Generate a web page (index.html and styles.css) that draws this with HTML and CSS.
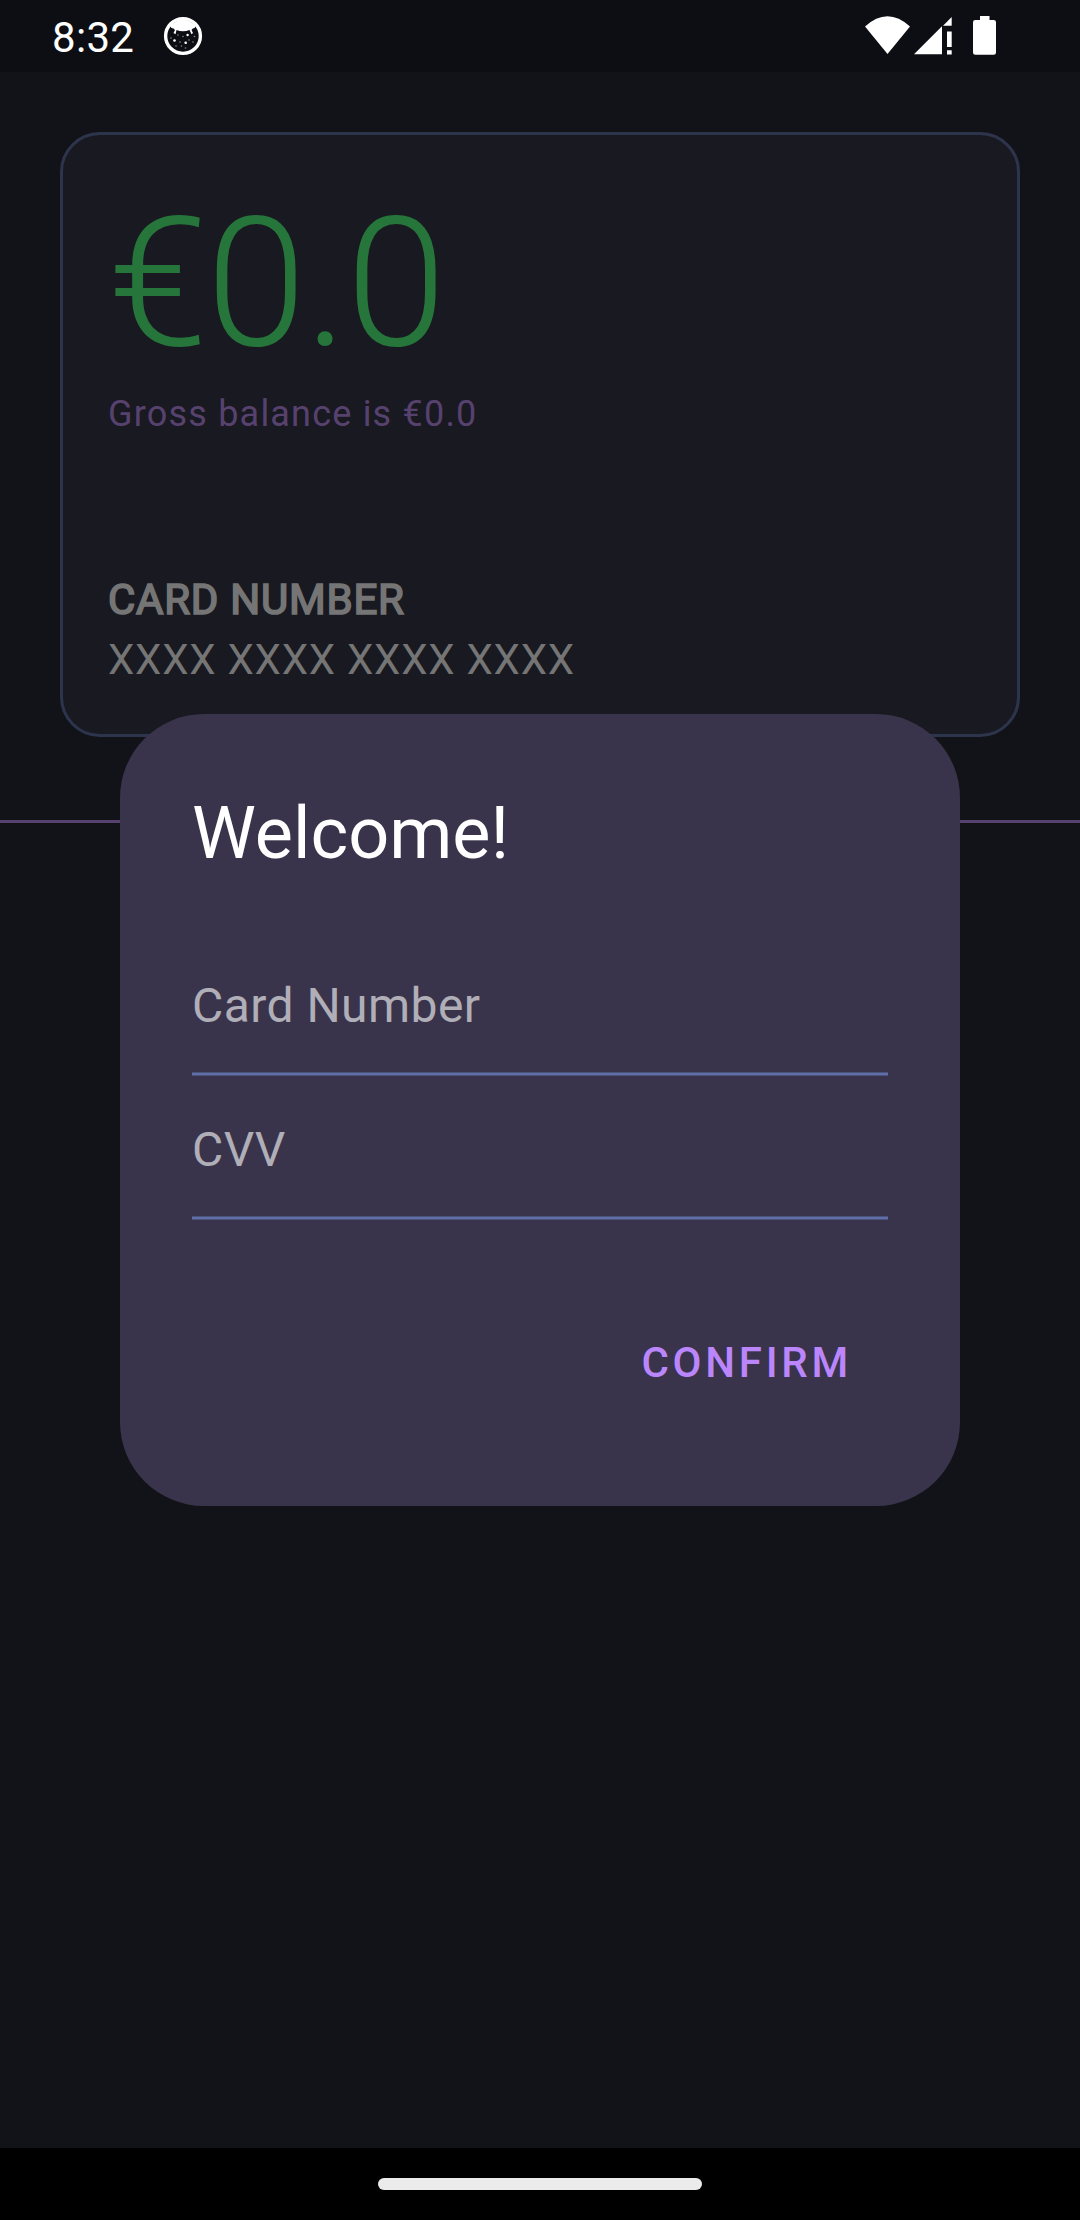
FILE: index.html
```html
<!DOCTYPE html>
<html lang="en">
<head>
<meta charset="utf-8">
<title>Balance</title>
<link rel="stylesheet" href="styles.css">
</head>
<body>
<div class="screen">
  <header class="status">
    <span class="time">8:32</span>
    <svg class="bear" width="40" height="40" viewBox="0 0 40 40">
      <circle cx="20" cy="20" r="17.400" fill="none" stroke="#fff" stroke-width="3.400"/>
      <path d="M7 10Q20-3 33 10L31.500 12L29.800 12.500L28.500 14L30 17L28.500 18.200L26.500 14Q20 16.500 13.500 14L12.500 18.200L10.500 17L12 14L10.500 12.500L8.500 12Z" fill="#fff"/>
      <g fill="#fff"><circle cx="11.500" cy="24.500" r="1.300"/><circle cx="22.700" cy="26.700" r="1.300"/><circle cx="24.600" cy="19" r="1.200"/></g>
      <g fill="#888"><circle cx="15" cy="19" r=".8"/><circle cx="20" cy="20.500" r=".8"/><circle cx="31.500" cy="20.500" r=".8"/><circle cx="17" cy="26" r=".8"/><circle cx="26" cy="24" r=".8"/><circle cx="30" cy="26" r=".8"/><circle cx="13" cy="30" r=".8"/><circle cx="18.500" cy="30" r=".8"/><circle cx="22.500" cy="32" r=".8"/><circle cx="8" cy="22" r=".8"/></g>
    </svg>
    <svg class="signals" width="140" height="40" viewBox="0 0 140 40" fill="#fff">
      <path d="M0 10.500Q22.500-10 45 10.500L22.500 38Z"/>
      <path d="M49 38.300L77 10.300V38.300Z"/>
      <path d="M78 9.700L86.700 1V9.700Z"/>
      <path d="M82 15.500h4.700v15.500H82ZM82 34.300h4.700v4.200H82Z"/>
      <path d="M115 0h9.500v4h4.200q2.300 0 2.300 2.300v30.200q0 2.300-2.300 2.300h-18.400q-2.300 0-2.300-2.300V6.300q0-2.300 2.300-2.300h4.700Z"/>
    </svg>
  </header>
  <main class="content">
    <section class="card">
      <div class="balance">€0.0</div>
      <div class="gross">Gross balance is €0.0</div>
      <div class="label">CARD NUMBER</div>
      <div class="number">XXXX XXXX XXXX XXXX</div>
    </section>
    <div class="divider"></div>
  </main>
  <footer class="nav"><div class="handle"></div></footer>
  <div class="dialog">
    <h1 class="title">Welcome!</h1>
    <div class="field first">Card Number</div>
    <div class="field">CVV</div>
    <div class="actions"><span class="confirm">CONFIRM</span></div>
  </div>
</div>
</body>
</html>
```
FILE: styles.css
```css
* { box-sizing: border-box; }
body { margin: 0; background: #121318; font-family: Roboto, sans-serif; }
.screen { position: relative; width: 1080px; height: 2220px; display: flex; flex-direction: column; overflow: hidden; }
.status { height: 72px; flex: none; display: flex; background: #0d0e13; padding: 16px 75px 0 52px; }
.time { width: 111px; padding-top: 1px; font-size: 42px; line-height: 42px; letter-spacing: 0.3px; color: #fff; }
.signals { margin-left: auto; }
.content { flex: 1; padding-top: 60px; background: #121318; }
.card { margin: 0 60px; height: 605px; padding: 59px 45px 0; border: 3px solid #2d354d; border-radius: 40px; background: #191921; }
.balance { height: 180px; font-size: 180px; line-height: 180px; font-weight: 300; letter-spacing: -1.5px; color: #26753a; }
.gross { margin-top: 19px; font-size: 36px; line-height: 42px; letter-spacing: 1.2px; color: #57426f; }
.label { margin-top: 135px; font-size: 42px; line-height: 60px; letter-spacing: 0.75px; color: #757575; -webkit-text-stroke: 1.7px #757575; }
.number { font-size: 42px; line-height: 60px; letter-spacing: 0.75px; color: #757575; }
.divider { height: 3px; margin-top: 83px; background: #57426f; }
.nav { height: 72px; flex: none; background: #000; padding-top: 30px; }
.handle { width: 324px; height: 12px; margin: 0 auto; border-radius: 6px; background: #ebebeb; }
.dialog { position: absolute; left: 120px; top: 714px; width: 840px; height: 792px; padding: 72px 72px 0; border-radius: 84px; background: #39344b; }
.title { margin: 0 0 84px; font-size: 72px; line-height: 96px; font-weight: 400; color: #fff; }
.field {
  height: 144px;
  padding-top: 46px;
  font-size: 48px;
  line-height: 56px;
  letter-spacing: 0.45px;
  color: #b0aeb7;
  background: linear-gradient(#4c5279 1px, #5f70a8 1px 3px, #4c5279 3px) bottom / 100% 4px no-repeat;
}
.first { height: 110px; padding-top: 12px; }
.actions { display: flex; justify-content: flex-end; padding: 119px 36px 0 0; }
.confirm { font-size: 42px; line-height: 48px; font-weight: 500; letter-spacing: 3.75px; color: #bb86fc; }
```
